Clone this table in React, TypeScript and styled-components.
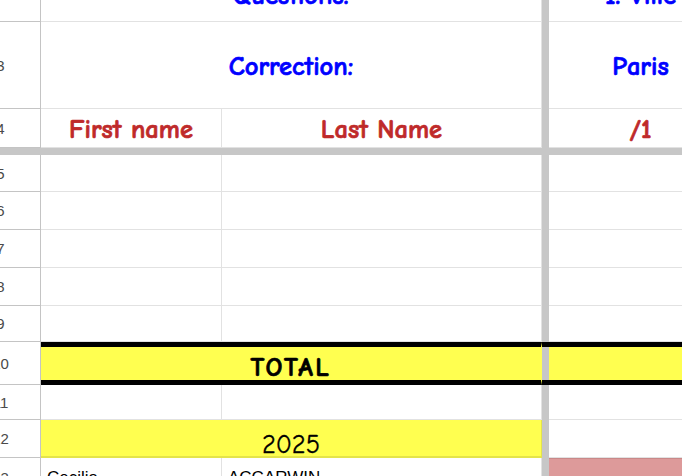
import React from "react";
import styled, { createGlobalStyle } from "styled-components";

const COLORS = {
  GRID: "#e2e2e2",
  HEAD_LINE: "#c4c4c4",
  FROZEN: "#c7c7c7",
  BLUE: "#0000ff",
  RED: "#bf2a2a",
  YELLOW: "#ffff50",
  YELLOW_EDGE: "#e4e44a",
  PINK: "#dd9a9a",
  PINK_EDGE: "#c98888",
  HEAD_TEXT: "#4a4a4a",
};

const COMIC = `"Comic Sans MS", "Comic Neue", "DejaVu Sans", sans-serif`;

const GlobalStyle = createGlobalStyle`
  html, body {
    margin: 0;
    padding: 0;
    background: #fff;
    overflow: hidden;
  }
`;

const Viewport = styled.div`
  width: 682px;
  height: 476px;
  overflow: hidden;
  background: #fff;
`;

// the sheet is scrolled a little: row 2 and the row numbers are cut off
const Sheet = styled.div`
  display: grid;
  grid-template-columns: 80px 181px 320px 7px 184px;
  grid-template-rows: 83px 87px 39px 7px 37px 38px 38px 38px 36px 43px 35px 38px 40px;
  width: max-content;
  margin: -61px 0 0 -39px;
`;

const RowHead = styled.div`
  box-sizing: border-box;
  display: flex;
  align-items: center;
  justify-content: center;
  border-right: 1px solid ${COLORS.HEAD_LINE};
  border-bottom: 1px solid ${COLORS.HEAD_LINE};
  font-family: "Liberation Sans", Arial, sans-serif;
  font-size: 15px;
  color: ${COLORS.HEAD_TEXT};
`;

type TCellProps = {
  $span?: number;
  $align?: "left" | "center";
  $valign?: "center" | "bottom";
  $fill?: "white" | "yellow" | "total" | "pink";
};

const Cell = styled.div<TCellProps>`
  grid-column: span ${(p) => p.$span ?? 1};
  box-sizing: border-box;
  display: flex;
  align-items: ${(p) => (p.$valign === "bottom" ? "flex-end" : "center")};
  justify-content: ${(p) => (p.$align === "left" ? "flex-start" : "center")};
  padding: ${(p) => (p.$align === "left" ? "0 0 0 6px" : "0")};
  overflow: hidden;
  white-space: nowrap;
  border-right: 1px solid ${COLORS.GRID};
  border-bottom: 1px solid ${COLORS.GRID};
  background: #fff;

  ${(p) =>
    p.$fill === "yellow" &&
    `
    background: ${COLORS.YELLOW};
    border-right-color: ${COLORS.YELLOW_EDGE};
    border-bottom: 2px solid ${COLORS.YELLOW_EDGE};
  `}
  ${(p) =>
    p.$fill === "total" &&
    `
    background: ${COLORS.YELLOW};
    border-top: 5px solid #000;
    border-bottom: 5px solid #000;
    border-right-color: ${COLORS.YELLOW};
  `}
  ${(p) =>
    p.$fill === "pink" &&
    `
    background: ${COLORS.PINK};
    border-top: 1px solid ${COLORS.PINK_EDGE};
  `}
`;

const VDivider = styled.div<{ $total?: boolean }>`
  box-sizing: border-box;
  background: ${COLORS.FROZEN};
  border-top: ${(p) => (p.$total ? "5px solid #000" : "none")};
  border-bottom: ${(p) => (p.$total ? "5px solid #000" : "none")};
`;

const HDivider = styled.div`
  grid-column: 1 / -1;
  background: ${COLORS.FROZEN};
`;

type TTone = "question" | "header" | "total" | "year" | "name";

const TONE_SHIFT: Record<TTone, string> = {
  question: "4px 0 0 0",
  header: "4px 0 0 0",
  total: "0",
  year: "0",
  name: "0",
};

const Label = styled.span<{ $tone: TTone }>`
  font-family: ${(p) => (p.$tone === "name" ? `"Liberation Sans", Arial, sans-serif` : COMIC)};
  font-size: ${(p) => (p.$tone === "name" ? "17px" : "26.5px")};
  font-weight: ${(p) => (p.$tone === "year" || p.$tone === "name" ? 400 : 700)};
  -webkit-text-stroke: ${(p) =>
    p.$tone === "name" ? "0" : p.$tone === "year" ? "0.3px currentColor" : "0.7px currentColor"};
  letter-spacing: ${(p) => (p.$tone === "total" ? "2.5px" : "0")};
  line-height: 1;
  color: ${(p) =>
    p.$tone === "question" ? COLORS.BLUE : p.$tone === "header" ? COLORS.RED : "#000"};
  padding: ${(p) => TONE_SHIFT[p.$tone]};
  margin-bottom: ${(p) => (p.$tone === "total" ? "-1px" : p.$tone === "year" ? "-2px" : "0")};
`;

const QuestionLabel = styled(Label)`
  padding: 0 0 12px 0;
`;

const BlankRow = ({ n }: { n: number }) => (
  <>
    <RowHead>{n}</RowHead>
    <Cell />
    <Cell />
    <VDivider />
    <Cell />
  </>
);

export default function App() {
  return (
    <Viewport>
      <GlobalStyle />
      <Sheet>
        <RowHead>2</RowHead>
        <Cell $span={2} $valign="bottom">
          <QuestionLabel $tone="question">Questions:</QuestionLabel>
        </Cell>
        <VDivider />
        <Cell $valign="bottom">
          <QuestionLabel $tone="question">1. Ville</QuestionLabel>
        </Cell>

        <RowHead>3</RowHead>
        <Cell $span={2}>
          <Label $tone="question">Correction:</Label>
        </Cell>
        <VDivider />
        <Cell>
          <Label $tone="question">Paris</Label>
        </Cell>

        <RowHead>4</RowHead>
        <Cell>
          <Label $tone="header">First name</Label>
        </Cell>
        <Cell>
          <Label $tone="header">Last Name</Label>
        </Cell>
        <VDivider />
        <Cell>
          <Label $tone="header">/1</Label>
        </Cell>

        <HDivider />

        {[5, 6, 7, 8, 9].map((n) => (
          <BlankRow key={n} n={n} />
        ))}

        <RowHead>10</RowHead>
        <Cell $span={2} $fill="total" $valign="bottom">
          <Label $tone="total">TOTAL</Label>
        </Cell>
        <VDivider $total />
        <Cell $fill="total" />

        <BlankRow n={11} />

        <RowHead>12</RowHead>
        <Cell $span={2} $fill="yellow" $valign="bottom">
          <Label $tone="year">2025</Label>
        </Cell>
        <VDivider />
        <Cell />

        <RowHead>13</RowHead>
        <Cell $align="left">
          <Label $tone="name">Cecilia</Label>
        </Cell>
        <Cell $align="left">
          <Label $tone="name">ACCARWIN</Label>
        </Cell>
        <VDivider />
        <Cell $fill="pink" />
      </Sheet>
    </Viewport>
  );
}
